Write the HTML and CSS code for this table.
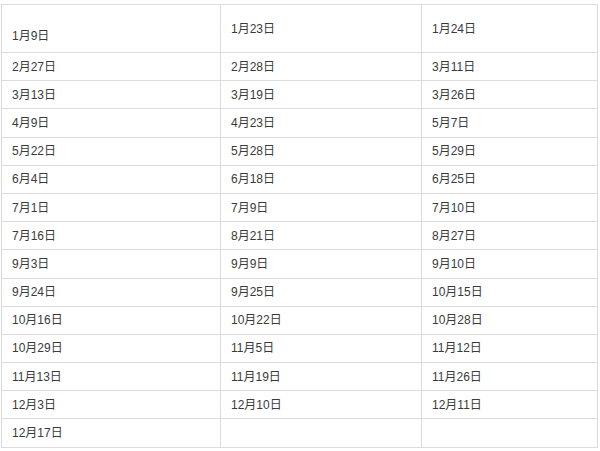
FILE: index.html
```html
<!DOCTYPE html>
<html>
<head>
<meta charset="utf-8">
<link rel="stylesheet" href="styles.css">
</head>
<body>
<table class="dates">
  <colgroup><col class="c1"><col class="c2"><col class="c3"></colgroup>
  <tr class="head"><td class="low">1月9日</td><td>1月23日</td><td>1月24日</td></tr>
  <tr><td>2月27日</td><td>2月28日</td><td>3月11日</td></tr>
  <tr><td>3月13日</td><td>3月19日</td><td>3月26日</td></tr>
  <tr><td>4月9日</td><td>4月23日</td><td>5月7日</td></tr>
  <tr><td>5月22日</td><td>5月28日</td><td>5月29日</td></tr>
  <tr><td>6月4日</td><td>6月18日</td><td>6月25日</td></tr>
  <tr><td>7月1日</td><td>7月9日</td><td>7月10日</td></tr>
  <tr><td>7月16日</td><td>8月21日</td><td>8月27日</td></tr>
  <tr><td>9月3日</td><td>9月9日</td><td>9月10日</td></tr>
  <tr><td>9月24日</td><td>9月25日</td><td>10月15日</td></tr>
  <tr><td>10月16日</td><td>10月22日</td><td>10月28日</td></tr>
  <tr><td>10月29日</td><td>11月5日</td><td>11月12日</td></tr>
  <tr><td>11月13日</td><td>11月19日</td><td>11月26日</td></tr>
  <tr><td>12月3日</td><td>12月10日</td><td>12月11日</td></tr>
  <tr><td>12月17日</td><td></td><td></td></tr>
</table>
</body>
</html>
```
FILE: styles.css
```css
html, body {
  margin: 0;
  padding: 0;
  background: #fff;
}
.dates {
  margin: 4px 0 0 1px;
  border-collapse: collapse;
  table-layout: fixed;
  width: 596px;
  font-family: "Liberation Sans", "Noto Sans CJK SC", sans-serif;
  font-size: 12px;
  color: #3a3a3a;
}
.c1 { width: 219px; }
.c2 { width: 201px; }
.c3 { width: 176px; }
.dates td {
  border: 1px solid #dcdcdc;
  padding: 0 10px 3px;
  height: 28.2px;
  vertical-align: middle;
  box-sizing: border-box;
}
.dates .head td {
  height: 48px;
}
.dates .head td.low {
  vertical-align: bottom;
  padding-bottom: 9px;
}
```
